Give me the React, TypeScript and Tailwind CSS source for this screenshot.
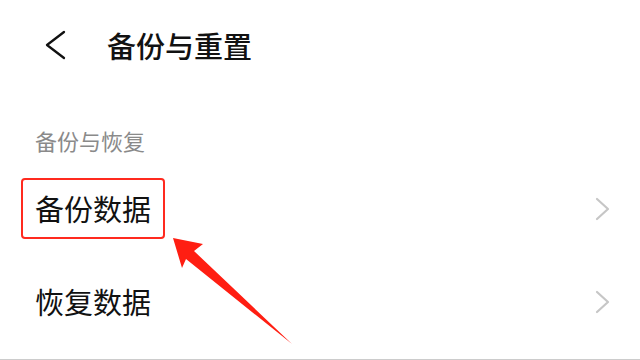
import React from "react";

const font = { fontFamily: '"Noto Sans CJK SC", "Noto Sans", sans-serif' };

function ChevronRight() {
  return (
    <svg width="16" height="24" viewBox="0 0 16 24" className="shrink-0">
      <polyline points="2,2 13,12 2,22" fill="none" stroke="#c6c6c6" strokeWidth="2.2" strokeLinecap="round" strokeLinejoin="round" />
    </svg>
  );
}

export default function App() {
  return (
    <div className="relative w-[640px] h-[360px] overflow-hidden bg-white border-b border-[#cccccc]" style={font}>
      <div className="h-[90px] flex items-center">
        <svg width="24" height="30" viewBox="0 0 24 30" className="ml-[44px] shrink-0">
          <polyline points="20,2 3,15 20,28" fill="none" stroke="#111111" strokeWidth="2.3" strokeLinecap="round" strokeLinejoin="round" />
        </svg>
        <div className="ml-[39px] text-[29px] leading-[29px] font-medium text-[#111111]">备份与重置</div>
      </div>
      <div className="mt-[39px] pl-[35px] text-[22px] leading-[22px] text-[#8a8a8a]">备份与恢复</div>
      <div className="mt-[11px]">
        <div className="relative h-[93px] flex items-center justify-between pl-[35px] pr-[29px]">
          <span className="text-[29px] leading-[29px] text-[#111111]">备份数据</span>
          <ChevronRight />
          <div className="absolute left-[21px] top-[16px] w-[144px] h-[61px] border-2 border-[#ff2a1f] rounded-[4px]" />
        </div>
        <div className="h-[93px] flex items-center justify-between pl-[35px] pr-[29px]">
          <span className="text-[29px] leading-[29px] text-[#111111]">恢复数据</span>
          <ChevronRight />
        </div>
      </div>
      <svg className="absolute left-0 top-0 pointer-events-none" width="640" height="360" viewBox="0 0 640 360">
        <polygon points="173,238 203,244 194,251 292,344 186,259 182,268" fill="#ff1e12" />
      </svg>
    </div>
  );
}
